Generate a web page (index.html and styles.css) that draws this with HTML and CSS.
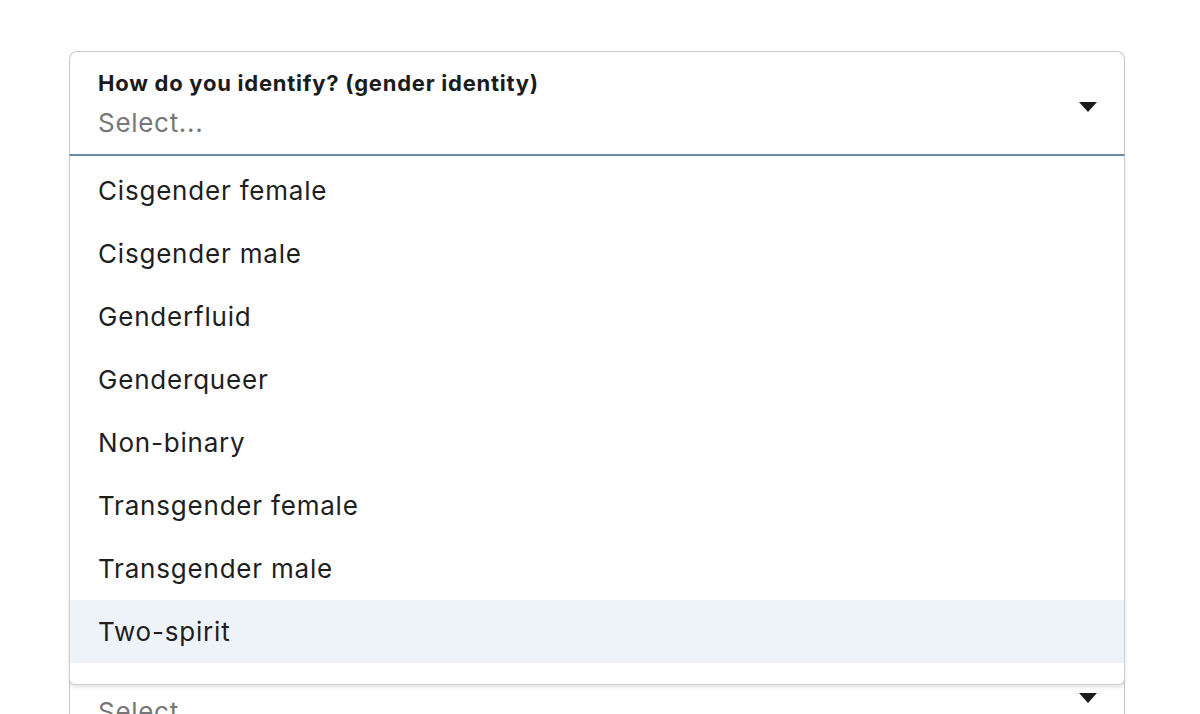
FILE: index.html
```html
<!DOCTYPE html>
<html>
<head>
<meta charset="utf-8">
<link rel="stylesheet" href="styles.css">
</head>
<body>
<div class="page">
  <div class="group">
    <div class="field is-open">
      <div class="field-text">
        <div class="label">How do you identify? (gender identity)</div>
        <div class="placeholder">Select...</div>
      </div>
      <svg class="caret" width="20" height="12" viewBox="0 0 20 12"><path d="M1 1 H19 L10 11 Z" fill="#1c1c1c"/></svg>
    </div>
    <ul class="menu">
      <li class="option">Cisgender female</li>
      <li class="option">Cisgender male</li>
      <li class="option">Genderfluid</li>
      <li class="option">Genderqueer</li>
      <li class="option">Non-binary</li>
      <li class="option">Transgender female</li>
      <li class="option">Transgender male</li>
      <li class="option is-active">Two-spirit</li>
    </ul>
  </div>
  <div class="field second">
    <div class="field-text">
      <div class="label">How would you describe your sexual orientation?</div>
      <div class="placeholder">Select...</div>
    </div>
    <svg class="caret" width="20" height="12" viewBox="0 0 20 12"><path d="M1 1 H19 L10 11 Z" fill="#1c1c1c"/></svg>
  </div>
</div>
</body>
</html>
```
FILE: styles.css
```css
* { box-sizing: border-box; }
html, body { margin: 0; padding: 0; background: #fff; }
body {
  font-family: Inter, "Noto Sans", "Liberation Sans", sans-serif;
  color: #1e1e1e;
  height: 714px;
  overflow: hidden;
}
.page {
  padding: 51px 0 0 69px;
  width: 1125px;
}
.group { position: relative; }
.field {
  display: flex;
  align-items: center;
  justify-content: space-between;
  border: 1px solid #c9c9c9;
  border-radius: 8px;
  height: 105px;
  padding: 6px 26px 0 28px;
  background: #fff;
}
.field.is-open {
  border-bottom: 2px solid #6d89ab;
  border-radius: 8px 8px 0 0;
}
.field-text { display: flex; flex-direction: column; gap: 11px; padding-bottom: 4px; }
.label {
  font-weight: 700;
  font-size: 22px;
  letter-spacing: 0.75px;
  color: #1b1b1b;
  line-height: 1.2;
}
.placeholder {
  font-size: 26px;
  letter-spacing: 0.7px;
  color: #777;
  line-height: 1.2;
}
.caret { margin-top: 2px; }
.menu {
  position: absolute;
  left: 0;
  right: 0;
  top: 105px;
  margin: 0;
  padding: 3px 0 21px;
  list-style: none;
  background: #fff;
  border: 1px solid #cfcfcf;
  border-top: none;
  border-radius: 0 0 6px 6px;
  box-shadow: 0 2px 4px rgba(0,0,0,0.12);
  z-index: 2;
}
.option {
  height: 63px;
  display: flex;
  align-items: center;
  padding-left: 28px;
  font-size: 26px;
  letter-spacing: 0.8px;
  color: #1e1e1e;
}
.option.is-active { background: #eef2f9; }
.second { margin-top: 483px; }
.second .caret { margin-top: 6px; }
```
